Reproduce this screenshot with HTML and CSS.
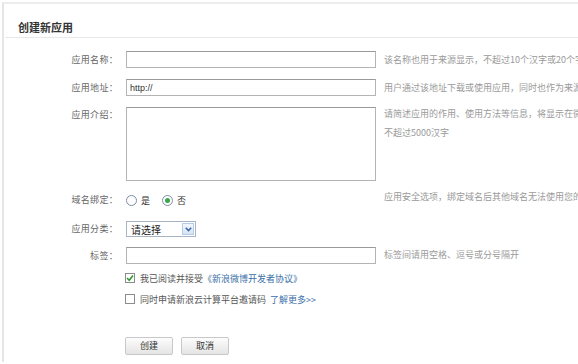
FILE: index.html
```html
<!DOCTYPE html>
<html lang="zh">
<head>
<meta charset="utf-8">
<title>创建新应用</title>
<link rel="stylesheet" href="styles.css">
</head>
<body>
<div class="panel">
  <h2 class="title">创建新应用</h2>
  <form class="form">
    <div class="row r1">
      <label class="lbl">应用名称：</label>
      <input class="text" type="text">
      <p class="hint">该名称也用于来源显示，不超过10个汉字或20个字母</p>
    </div>
    <div class="row r2">
      <label class="lbl">应用地址：</label>
      <input class="text" type="text" value="http://">
      <p class="hint">用户通过该地址下载或使用应用，同时也作为来源链接</p>
    </div>
    <div class="row r3">
      <label class="lbl">应用介绍：</label>
      <textarea class="area"></textarea>
      <p class="hint multi">请简述应用的作用、使用方法等信息，将显示在微博<br>不超过5000汉字</p>
    </div>
    <div class="row r4">
      <label class="lbl">域名绑定：</label>
      <div class="radios">
        <span class="radio"></span><span class="opt">是</span>
        <span class="radio on"></span><span class="opt">否</span>
      </div>
      <p class="hint">应用安全选项，绑定域名后其他域名无法使用您的应用</p>
    </div>
    <div class="row r5">
      <label class="lbl">应用分类：</label>
      <div class="select">
        <span class="sel-text">请选择</span>
        <span class="sel-arrow"><svg width="7" height="5" viewBox="0 0 7 5"><path d="M0.8 0.8 L3.5 3.6 L6.2 0.8" fill="none" stroke="#3b64a8" stroke-width="1.5"/></svg></span>
      </div>
    </div>
    <div class="row r6">
      <label class="lbl">标签：</label>
      <input class="text" type="text">
      <p class="hint">标签间请用空格、逗号或分号隔开</p>
    </div>
    <div class="check r7">
      <span class="box on"><svg width="8" height="8" viewBox="0 0 8 8"><path d="M1 4 L3.2 6.2 L7 1.5" fill="none" stroke="#2f9a2f" stroke-width="1.6"/></svg></span>
      <span class="ctext">我已阅读并接受</span><a class="link" href="#">《新浪微博开发者协议》</a>
    </div>
    <div class="check r8">
      <span class="box"></span>
      <span class="ctext">同时申请新浪云计算平台邀请码</span><a class="link more" href="#">了解更多&gt;&gt;</a>
    </div>
    <div class="buttons">
      <button class="btn" type="button">创建</button>
      <button class="btn" type="button">取消</button>
    </div>
  </form>
</div>
</body>
</html>
```
FILE: styles.css
```css
html, body {
  margin: 0;
  padding: 0;
  background: #fff;
  overflow: hidden;
}
body {
  width: 578px;
  height: 364px;
  font-family: "Noto Sans CJK SC", "Liberation Sans", sans-serif;
  font-size: 9px;
  color: #666;
}
.panel {
  margin: 2px 0 0 2px;
  border-top: 2px solid #ececec;
  border-left: 2px solid #e6e6e6;
  height: 358px;
  overflow: hidden;
}
.title {
  margin: 0 0 0 1px;
  padding: 16px 0 3px 13px;
  height: 14px;
  line-height: 14px;
  font-size: 11px;
  font-weight: bold;
  color: #333;
  border-bottom: 1px solid #e8e8e8;
}
.form {
  padding-top: 13px;
}
.row {
  display: grid;
  grid-template-columns: 114px 250px 1fr;
  column-gap: 8px;
  align-items: center;
  white-space: nowrap;
}
.lbl {
  text-align: right;
  color: #666;
  line-height: 12px;
  letter-spacing: 0.3px;
}
.text {
  box-sizing: border-box;
  width: 250px;
  height: 17px;
  margin: 0;
  padding: 0 3px;
  border: 1px solid #b4b4b4;
  border-top-color: #9a9a9a;
  font-family: "Liberation Sans", sans-serif;
  font-size: 9px;
  color: #333;
  outline: none;
}
.hint {
  margin: 0;
  color: #9a9a9a;
  overflow: hidden;
  line-height: 12px;
}
.r1 { margin-bottom: 11px; }
.r2 { margin-bottom: 11px; }
.r3 { align-items: start; margin-bottom: 11px; }
.r3 .lbl { margin-top: 2px; }
.r3 .hint { line-height: 19px; margin-top: -3px; }
.area {
  box-sizing: border-box;
  width: 250px;
  height: 74px;
  margin: 0;
  border: 1px solid #b4b4b4;
  border-top-color: #9a9a9a;
  resize: none;
  outline: none;
}
.r4 { height: 16px; margin-bottom: 13px; }
.r4 .hint { margin-top: -6px; }
.radios {
  display: flex;
  align-items: center;
}
.radio {
  box-sizing: border-box;
  width: 11px;
  height: 11px;
  border: 1px solid #7d8ea3;
  border-radius: 50%;
  background: #fff;
  display: flex;
  align-items: center;
  justify-content: center;
}
.radio.on::after {
  content: "";
  width: 5px;
  height: 5px;
  border-radius: 50%;
  background: #3aa54a;
}
.opt {
  color: #333;
  margin-left: 4px;
  margin-right: 12px;
}
.r5 { height: 16px; margin-bottom: 10px; }
.select {
  position: relative;
  box-sizing: border-box;
  width: 70px;
  height: 16px;
  border: 1px solid #a9b4c2;
  display: flex;
  align-items: center;
  background: #fff;
}
.sel-text {
  padding-left: 4px;
  font-size: 10px;
  color: #222;
}
.sel-arrow {
  position: absolute;
  right: 1px;
  top: 1px;
  width: 12px;
  height: 12px;
  box-sizing: border-box;
  border: 1px solid #b8cbe6;
  background: linear-gradient(#f3f7fd, #d6e3f5);
  display: flex;
  align-items: center;
  justify-content: center;
}
.r6 { margin-bottom: 8px; }
.r6 .hint { margin-top: -2px; }
.check {
  display: flex;
  align-items: center;
  height: 12px;
  padding-left: 121px;
  white-space: nowrap;
}
.r7 { margin-bottom: 9px; }
.box {
  box-sizing: border-box;
  width: 10px;
  height: 10px;
  border: 1px solid #8c8c8c;
  background: #fff;
  display: flex;
  align-items: center;
  justify-content: center;
  margin-right: 5px;
}
.ctext {
  color: #555;
}
.link {
  color: #3a6fa8;
  text-decoration: none;
}
.more {
  margin-left: 4px;
}
.buttons {
  display: flex;
  gap: 8px;
  padding-left: 121px;
  margin-top: 32px;
}
.btn {
  box-sizing: border-box;
  width: 48px;
  height: 18px;
  margin: 0;
  padding: 0;
  border: 1px solid #c8c8c8;
  border-radius: 2px;
  background: linear-gradient(#fdfdfd, #e4e4e4);
  font-family: "Noto Sans CJK SC", sans-serif;
  font-size: 9px;
  color: #333;
  line-height: 16px;
}
```
